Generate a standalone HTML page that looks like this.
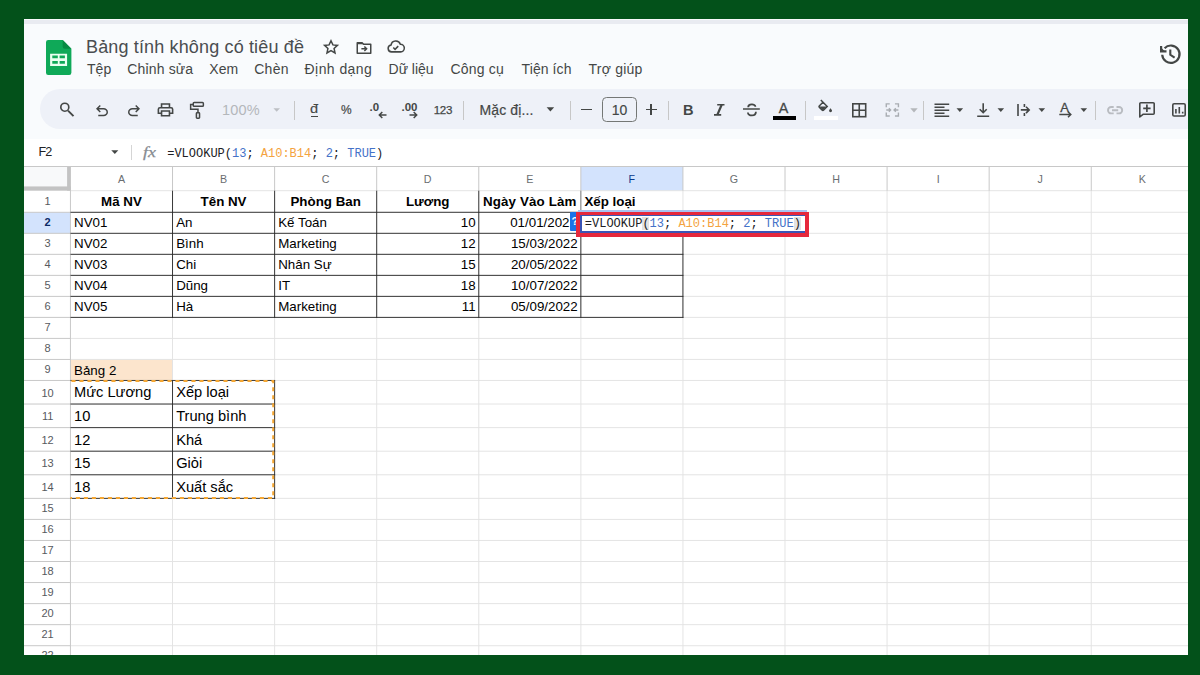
<!DOCTYPE html><html><head><meta charset="utf-8"><title>Sheet</title><style>

html,body{margin:0;padding:0}
body{width:1200px;height:675px;overflow:hidden;background:#03511a;font-family:"Liberation Sans",sans-serif;position:relative}
#f{position:absolute;left:24px;top:19px;width:1164px;height:636px;background:#fff;overflow:hidden}
#f *{position:absolute;box-sizing:border-box}
#f span,#f svg *{position:static}
.t{white-space:nowrap;line-height:1}
.m{font-size:14px;color:#444746;top:63px;height:16px;line-height:16px}
.hl{background:#e1e1e1;height:1px;left:0;width:1164px}
.vl{background:#e1e1e1;width:1px}
.bh{background:#222;height:1px}
.bv{background:#222;width:1px}
.ch{font-size:10.7px;color:#6a6d70;text-align:center;height:14px;line-height:14px}
.rh{font-size:11px;color:#575a5e;text-align:center;left:0.6px;width:46px}
.c{font-size:13.33px;color:#000;white-space:nowrap}
.c2{font-size:14.67px;color:#000;white-space:nowrap}
.b{font-weight:bold}
.sep{width:1px;background:#c7c7c7;top:82px;height:19px}
svg{overflow:visible}
.mono{font-family:"Liberation Mono",monospace;font-size:12px;white-space:pre;color:#202124}
.bl{color:#4472c8}.or{color:#f4a340}

</style></head><body><div id="f">
<div style="left:0;top:0;width:1164px;height:119.6px;background:#f9fbfd"></div>
<div style="left:0;top:0.5px;width:1164px;height:4.5px;background:#e9ebf1"></div>
<svg style="left:21.6px;top:20.8px" width="25.4" height="35" viewBox="0 0 25.4 35">
<path d="M2.2 0H16.7L25.4 8.7V32.8a2.2 2.2 0 0 1-2.2 2.2H2.2a2.2 2.2 0 0 1-2.2-2.2V2.2a2.2 2.2 0 0 1 2.2-2.2z" fill="#0fa958"/>
<path d="M16.7 0L25.4 8.7H18.9a2.2 2.2 0 0 1-2.2-2.2z" fill="#078a43"/>
<path d="M4.1 13.8H21.1V25.9H4.1zM6.3 15.6V18.2H11.8V15.6zM13.6 15.6V18.2H18.9V15.6zM6.3 20.9V23.8H11.8V20.9zM13.6 20.9V23.8H18.9V20.9z" fill="#eafff1" fill-rule="evenodd"/>
</svg>
<div class="t" id="title" style="left:62px;top:17.5px;font-size:18px;color:#4a4d50;height:20px;line-height:20px;letter-spacing:0.15px">Bảng tính không có tiêu đề</div>
<div class="t m" id="m0" style="left:63px;top:42px;letter-spacing:0.05px">Tệp</div>
<div class="t m" id="m1" style="left:103.3px;top:42px;letter-spacing:0.15px">Chỉnh sửa</div>
<div class="t m" id="m2" style="left:185.2px;top:42px;letter-spacing:0.15px">Xem</div>
<div class="t m" id="m3" style="left:230.2px;top:42px;letter-spacing:0.3px">Chèn</div>
<div class="t m" id="m4" style="left:280.6px;top:42px;letter-spacing:0.42px">Định dạng</div>
<div class="t m" id="m5" style="left:364.6px;top:42px;letter-spacing:-0.05px">Dữ liệu</div>
<div class="t m" id="m6" style="left:426.5px;top:42px;letter-spacing:0.18px">Công cụ</div>
<div class="t m" id="m7" style="left:497.6px;top:42px;letter-spacing:0.08px">Tiện ích</div>
<div class="t m" id="m8" style="left:564.6px;top:42px;letter-spacing:0.2px">Trợ giúp</div>
<div style="left:16.3px;top:69.9px;width:1300px;height:40.4px;border-radius:20.2px;background:#eef1f8"></div>
<div id="tb" style="left:-24px;top:-19px;width:1200px;height:675px">
<!-- header icons -->
<svg style="left:322px;top:38px" width="18" height="18" viewBox="0 0 24 24"><path d="M12 3.6l2.55 5.6 6.05.65-4.5 4.1 1.25 6-5.35-3.1-5.35 3.1 1.25-6-4.5-4.1 6.05-.65z" fill="none" stroke="#444746" stroke-width="2" stroke-linejoin="miter"/></svg>
<svg style="left:355px;top:38.5px" width="18" height="18" viewBox="0 0 24 24"><path d="M3 5h6.5l2 2H21v12H3z" fill="none" stroke="#444746" stroke-width="2" stroke-linejoin="round"/><path d="M3 5h6.500l2 2H3z" fill="#444746"/><path d="M8.5 13h6M12.5 10l3 3-3 3" fill="none" stroke="#444746" stroke-width="2"/></svg>
<svg style="left:386.300px;top:37.400px" width="19.400" height="19.200" viewBox="0 0 24 24"><path d="M6.8 18.6a4.3 4.3 0 0 1-.6-8.55A6 6 0 0 1 17.8 9a4.8 4.8 0 0 1 .4 9.6z" fill="none" stroke="#444746" stroke-width="1.9" stroke-linejoin="round"/><path d="M9 13.2l2.2 2.2 4-4" fill="none" stroke="#444746" stroke-width="1.9"/></svg>
<!-- history -->
<svg style="left:1158.300px;top:42px" width="24" height="24" viewBox="0 0 24 24"><path d="M4.200 12.800a8.700 8.700 0 1 0 2.400-6.600" fill="none" stroke="#444746" stroke-width="2.200"/><path d="M3.100 4v5.400h5.400" fill="none" stroke="#444746" stroke-width="2.200"/><path d="M3.100 5.500v3.900h3.900z" fill="#444746"/><path d="M12.3 7.4v5.4l4.3 2.9" fill="none" stroke="#444746" stroke-width="2.1"/></svg>

<!-- toolbar icons -->
<svg style="left:58px;top:101px" width="18" height="18" viewBox="0 0 18 18"><circle cx="6.800" cy="6.200" r="4" fill="none" stroke="#444746" stroke-width="1.650"/><path d="M10 9.6l5.5 5.5" stroke="#444746" stroke-width="1.9" fill="none"/></svg>
<svg style="left:92.9px;top:102.1px" width="18" height="18" viewBox="0 0 24 24"><path fill="#444746" d="M7 19v-2h7.1q1.575 0 2.738-1T18 13.5 16.838 11 14.1 10H7.8l2.6 2.6L9 14 4 9l5-5 1.400 1.400L7.800 8h6.300q2.425 0 4.163 1.575T20 13.500t-1.737 3.925T14.100 19z"/></svg>
<svg style="left:124.5px;top:102.1px" width="18" height="18" viewBox="0 0 24 24"><path fill="#444746" d="M9.900 19q-2.425 0-4.163-1.575T4 13.500t1.737-3.925T9.900 8h6.300l-2.600-2.600L15 4l5 5-5 5-1.400-1.400 2.600-2.600H9.900q-1.575 0-2.738 1T6 13.500 7.163 16 9.900 17H17v2z"/></svg>
<svg style="left:156.200px;top:101px" width="19" height="17.800" viewBox="0 0 24 24" preserveAspectRatio="none" fill="none" stroke="#444746" stroke-width="2"><path d="M7 8V4h10v4"/><path d="M6.5 16.500H3v-5.500a2 2 0 0 1 2-2h14a2 2 0 0 1 2 2v5.500h-3.500"/><path d="M7 13.500h10v6.500H7z"/></svg>
<svg style="left:187.600px;top:99.900px" width="18" height="20" viewBox="0 0 24 26.700" fill="none" stroke="#444746" stroke-width="2"><rect x="7" y="3.500" width="13.500" height="5" rx="1.200"/><path d="M7 6H3.500v6.500H13.300v4.500"/><rect x="11.200" y="17" width="4.200" height="7.500" rx="1"/></svg>
<div class="t" style="left:222px;top:102px;font-size:14.5px;color:#b4b7bb;height:16px;line-height:16px;letter-spacing:0.2px" id="zoom">100%</div>
<svg style="left:273.200px;top:108px" width="7.400" height="4.200" viewBox="0 0 9 5"><path d="M0.500 0.300h8L4.500 4.600z" fill="#bcbfc4"/></svg>
<div class="sep" style="left:294px;top:100.500px"></div>
<div class="t" style="left:310.300px;top:101.300px;font-size:13.500px;color:#444746;height:16px;line-height:16px;-webkit-text-stroke:0.150px #444746;transform:scaleX(1.080);transform-origin:0 0;" id="dong">đ</div>
<div style="left:310.500px;top:115.700px;width:7.800px;height:1.400px;background:#444746"></div>
<div class="t" style="left:340.700px;top:103.400px;font-size:13px;color:#444746;height:14px;line-height:14px;-webkit-text-stroke:0.200px #444746;transform:scaleX(0.920);transform-origin:0 0" id="pct">%</div>
<div class="t" style="left:369.500px;top:100.500px;font-size:11.500px;color:#444746;height:13px;line-height:13px;font-weight:bold" id="d0">.0</div>
<svg style="left:377.600px;top:110.900px" width="9" height="8" viewBox="0 0 9 8"><path d="M8.500 4H1.500M4.300 1L1.300 4l3 3" fill="none" stroke="#444746" stroke-width="1.500"/></svg>
<div class="t" style="left:401.500px;top:100.500px;font-size:11.500px;color:#444746;height:13px;line-height:13px;font-weight:bold;letter-spacing:0px" id="d00">.00</div>
<svg style="left:409px;top:110.900px" width="9" height="8" viewBox="0 0 9 8"><path d="M0.500 4h7M4.700 1l3 3-3 3" fill="none" stroke="#444746" stroke-width="1.500"/></svg>
<div class="t" style="left:433.700px;top:102.800px;font-size:11.600px;color:#444746;height:14px;line-height:14px;letter-spacing:-0.300px;-webkit-text-stroke:0.250px #444746" id="n123">123</div>
<div class="sep" style="left:463px;top:100.500px"></div>
<div class="t" style="left:479.500px;top:101.500px;font-size:14px;color:#444746;height:16px;line-height:16px;letter-spacing:0.120px;-webkit-text-stroke:0.200px #444746" id="font">Mặc đị...</div>
<svg style="left:546.400px;top:106.600px" width="8.800" height="5" viewBox="0 0 10 6"><path d="M0.500 0.300h9L5 5.300z" fill="#444746"/></svg>
<div class="sep" style="left:570px;top:100.500px"></div>
<div style="left:581px;top:108.500px;width:11px;height:1.900px;background:#444746"></div>
<div style="left:602px;top:97px;width:35px;height:24.500px;border:1px solid #747775;border-radius:4.500px"></div>
<div class="t" style="left:602px;width:35px;text-align:center;top:102px;font-size:14px;color:#444746;height:16px;line-height:16px;-webkit-text-stroke:0.150px #444746" id="fs">10</div>
<div style="left:645.500px;top:108.700px;width:11px;height:1.600px;background:#444746"></div>
<div style="left:650.200px;top:104px;width:1.600px;height:11px;background:#444746"></div>
<div class="sep" style="left:668.200px;top:100.500px"></div>
<div class="t" style="left:683px;top:101.500px;font-size:14.600px;color:#444746;height:16px;line-height:16px;font-weight:bold" id="bold">B</div>
<svg style="left:714.300px;top:104.100px" width="10.500" height="11.700" viewBox="0 0 10.500 11.700" fill="none" stroke="#444746"><path d="M3.200 0.800H10.500M0 10.900H7.200" stroke-width="1.600"/><path d="M7.700 0.800L3.300 10.900" stroke-width="2.200"/></svg>
<svg style="left:743px;top:103px" width="17" height="14" viewBox="0 0 17 14" fill="none" stroke="#444746"><path d="M0 6H16.800" stroke-width="1.500"/><path d="M5.200 4.200C5.200 0.600 12.400 0.600 12.400 3.700M4.900 9.400C4.900 13.600 12.900 13.600 12.900 8.700" stroke-width="1.800"/></svg>
<div class="t" style="left:778.800px;top:99.600px;font-size:14.300px;color:#444746;height:16px;line-height:16px;-webkit-text-stroke:0.300px #444746;" id="tcol">A</div>
<div style="left:772.500px;top:116px;width:23.500px;height:3.600px;background:#000"></div>
<div class="sep" style="left:805px;top:100.500px"></div>
<svg style="left:817.800px;top:98.600px" width="15.800" height="14.900" viewBox="0 0 18 17"><path d="M3.200 1.200l7.300 7.300-4.300 4.300a.9.900 0 0 1-1.300 0L1.400 9.300a.9.900 0 0 1 0-1.300l4.800-4.800" fill="none" stroke="#444746" stroke-width="1.700"/><path d="M1.500 8.700h8.500l-4.500 4.300z" fill="#444746"/><path d="M14.300 10.500s1.700 1.900 1.700 3a1.700 1.700 0 0 1-3.400 0c0-1.100 1.700-3 1.700-3z" fill="#444746"/></svg>
<div style="left:813.900px;top:116px;width:24.200px;height:3.600px;background:#fff"></div>
<svg style="left:852px;top:103px" width="14.500" height="14.500" viewBox="0 0 14.500 14.500" fill="none" stroke="#444746" stroke-width="1.600"><rect x="0.800" y="0.800" width="12.900" height="12.900"/><path d="M7.250 0.800v12.900M0.800 7.250h12.900"/></svg>
<svg style="left:885.300px;top:103.100px" width="14.700" height="13.900" viewBox="0 0 16 16" fill="none" stroke="#a9adb2" stroke-width="1.600"><path d="M5 1H1v4M11 1h4v4M5 15H1v-4M11 15h4v-4M1 8h5M4 6l2 2-2 2M15 8h-5M12 6l-2 2 2 2"/></svg>
<svg style="left:909.500px;top:108px" width="8" height="5" viewBox="0 0 8 5"><path d="M0.300 0.300h7.400L4 4.500z" fill="#b4b7bb"/></svg>
<div class="sep" style="left:923px;top:100.500px"></div>
<svg style="left:933.500px;top:102.800px" width="16" height="15" viewBox="0 0 16 15" stroke="#444746" stroke-width="1.550" fill="none"><path d="M0.500 1.200h14.700M0.500 4.200h10M0.500 7.200h14.700M0.500 10.200h10M0.500 13.200h14.700"/></svg>
<svg style="left:956.0px;top:107.700px" width="7.600" height="4.300" viewBox="0 0 9 5.500"><path d="M0.300 0.300h8.400L4.500 5z" fill="#444746"/></svg>
<svg style="left:976.500px;top:102.800px" width="12.400" height="14.200" viewBox="0 0 12.400 14.200" stroke="#444746" stroke-width="1.600" fill="none"><path d="M6.200 0.200v9.300M2.700 6.200l3.500 3.500 3.500-3.500M0.200 13.300h12"/></svg>
<svg style="left:997.3px;top:107.700px" width="7.600" height="4.300" viewBox="0 0 9 5.500"><path d="M0.300 0.300h8.400L4.500 5z" fill="#444746"/></svg>
<svg style="left:1016px;top:103px" width="15" height="14" viewBox="0 0 15 14" stroke="#444746" stroke-width="1.600" fill="none"><path d="M2 1v12M8.400 1v3M8.400 10v3M4.800 6.900h8M10 3.700l3.200 3.200-3.200 3.200"/></svg>
<svg style="left:1038.2px;top:107.700px" width="7.600" height="4.300" viewBox="0 0 9 5.500"><path d="M0.300 0.300h8.400L4.500 5z" fill="#444746"/></svg>
<div class="t" style="left:1060.300px;top:99.700px;font-size:13px;color:#444746;height:16px;line-height:16px;-webkit-text-stroke:0.300px #444746;" id="rot">A</div>
<svg style="left:1059px;top:110.800px" width="13" height="7" viewBox="0 0 13 7" stroke="#444746" stroke-width="1.500" fill="none"><path d="M0.300 3.500h11.500M9 0.700l2.800 2.800L9 6.300"/></svg>
<svg style="left:1079.5px;top:107.700px" width="7.600" height="4.300" viewBox="0 0 9 5.500"><path d="M0.300 0.300h8.400L4.500 5z" fill="#444746"/></svg>
<div class="sep" style="left:1095.300px;top:100.500px"></div>
<svg style="left:1106.500px;top:106px" width="16.200" height="8.400" viewBox="0 0 16.200 8.400" stroke="#b9bcc1" stroke-width="1.900" fill="none"><path d="M6.700 1H4.200a3.200 3.200 0 0 0 0 6.400H6.700M9.500 1h2.500a3.200 3.200 0 0 1 0 6.400H9.500M5 4.200h6.200"/></svg>
<svg style="left:1139px;top:102px" width="16" height="15.500" viewBox="0 0 16 15.500" stroke="#444746" stroke-width="1.600" fill="none"><path d="M1.800 0.800h12.400a1 1 0 0 1 1 1v9.500a1 1 0 0 1-1 1H4L0.800 15V1.800a1 1 0 0 1 1-1z" stroke-linejoin="round"/><path d="M7.900 2.600v7.400M4.200 6.300h7.400" stroke-width="1.700"/></svg>
<svg style="left:1172px;top:103.300px" width="14" height="13.800" viewBox="0 0 14 13.800" stroke="#444746" stroke-width="1.600" fill="none"><rect x="0.800" y="0.800" width="12.400" height="12.200" rx="1.300"/><path d="M3.900 10.600V6M7.300 10.600V4M10.700 10.600V8.800"/></svg>
</div>

<div id="fb" style="left:-24px;top:-19px;width:1200px;height:675px">
<div class="t" style="left:38.400px;top:145px;font-size:12.600px;letter-spacing:-0.900px;color:#202124;height:15px;line-height:15px" id="cellref">F2</div>
<svg style="left:111px;top:149.500px" width="7.600" height="4.200" viewBox="0 0 9 5"><path d="M0.300 0.300h8.400L4.500 4.700z" fill="#444746"/></svg>
<div style="left:131px;top:145px;width:1px;height:15px;background:#d5d5d5"></div>
<div class="t" style="left:143px;top:144.300px;font-size:15px;color:#868b91;-webkit-text-stroke:0.250px #868b91;height:17px;line-height:17px;font-family:'Liberation Serif',serif;font-style:italic;letter-spacing:0px;transform:scaleX(1.2);transform-origin:0 0" id="fx">fx</div>
<div class="mono" style="left:167.200px;top:146.800px;height:14px;line-height:14px" id="ftxt">=VLOOKUP(<span class="bl">13</span>; <span class="or">A10:B14</span>; <span class="bl">2</span>; <span class="bl">TRUE</span>)</div>
</div>

<div id="g" style="left:0;top:147.0px;width:1164px;height:489.0px;background:#fff;overflow:hidden">
<svg style="left:0;top:0" width="1164" height="489.0" viewBox="0 0 1164 489.0"><rect x="556.85" y="1.0" width="102.08" height="23.7" fill="#d3e3fd"/><rect x="0" y="46.3" width="46.45" height="21.02" fill="#d3e3fd"/><rect x="46.45" y="193.44" width="102.08" height="21.02" fill="#fce5cd"/><path d="M46.45 24.7H1164M46.45 46.3H1164M46.45 67.32H1164M46.45 88.34H1164M46.45 109.36H1164M46.45 130.38H1164M46.45 151.4H1164M46.45 172.42H1164M46.45 193.44H1164M46.45 214.46H1164M46.45 238.04H1164M46.45 261.62H1164M46.45 285.2H1164M46.45 308.78H1164M46.45 332.36H1164M46.45 353.41H1164M46.45 374.46H1164M46.45 395.51H1164M46.45 416.56H1164M46.45 437.61H1164M46.45 458.66H1164M46.45 479.71H1164M46.45 500.76H1164M148.53 24.7V489.0M250.61 24.7V489.0M352.69 24.7V489.0M454.77 24.7V489.0M556.85 24.7V489.0M658.93 24.7V489.0M761.01 24.7V489.0M863.09 24.7V489.0M965.17 24.7V489.0M1067.25 24.7V489.0M1169.33 24.7V489.0" stroke="#e3e3e3" stroke-width="0.95" fill="none"/><path d="M0 0.5H1164M0 46.3H46.45M0 67.32H46.45M0 88.34H46.45M0 109.36H46.45M0 130.38H46.45M0 151.4H46.45M0 172.42H46.45M0 193.44H46.45M0 214.46H46.45M0 238.04H46.45M0 261.62H46.45M0 285.2H46.45M0 308.78H46.45M0 332.36H46.45M0 353.41H46.45M0 374.46H46.45M0 395.51H46.45M0 416.56H46.45M0 437.61H46.45M0 458.66H46.45M0 479.71H46.45M0 500.76H46.45M148.53 0.5V24.7M250.61 0.5V24.7M352.69 0.5V24.7M454.77 0.5V24.7M556.85 0.5V24.7M658.93 0.5V24.7M761.01 0.5V24.7M863.09 0.5V24.7M965.17 0.5V24.7M1067.25 0.5V24.7M1169.33 0.5V24.7M46.45 24.7V489.0" stroke="#c8c8c8" stroke-width="1" fill="none"/><rect x="0" y="1.0" width="43.1" height="19.4" fill="#f8f9fa"/><rect x="43.1" y="1.0" width="3.8" height="23.7" fill="#c3c3c3"/><rect x="0" y="20.4" width="46.9" height="4.3" fill="#c3c3c3"/><path d="M556.85 24.7V46.3" stroke="#808080" stroke-width="1" fill="none"/><path d="M46.45 46.3H659.43M46.45 67.32H659.43M46.45 88.34H659.43M46.45 109.36H659.43M46.45 130.38H659.43M46.45 151.4H659.43M148.53 24.7V151.9M250.61 24.7V151.9M352.69 24.7V151.9M454.77 24.7V151.9M556.85 46.3V151.9M658.93 46.3V151.9M46.45 214.46H251.11M46.45 238.04H251.11M46.45 261.62H251.11M46.45 285.2H251.11M46.45 308.78H251.11M46.45 332.36H251.11M148.53 214.46V332.86M250.61 214.46V332.86" stroke="#292929" stroke-width="0.92" fill="none"/><path d="M46.45 214.96H249.21V331.96H46.45" fill="none" stroke="#f5a733" stroke-width="2" stroke-dasharray="4.1 3.9" stroke-dashoffset="-1"/><!--EDSVG--></svg>
<div class="ch" style="left:46.45px;top:5.6px;width:102.08px;color:#6a6d70">A</div>
<div class="ch" style="left:148.53px;top:5.6px;width:102.08px;color:#6a6d70">B</div>
<div class="ch" style="left:250.61px;top:5.6px;width:102.08px;color:#6a6d70">C</div>
<div class="ch" style="left:352.69px;top:5.6px;width:102.08px;color:#6a6d70">D</div>
<div class="ch" style="left:454.77px;top:5.6px;width:102.08px;color:#6a6d70">E</div>
<div class="ch" style="left:556.85px;top:5.6px;width:102.08px;color:#0b3a8c">F</div>
<div class="ch" style="left:658.93px;top:5.6px;width:102.08px;color:#6a6d70">G</div>
<div class="ch" style="left:761.01px;top:5.6px;width:102.08px;color:#6a6d70">H</div>
<div class="ch" style="left:863.09px;top:5.6px;width:102.08px;color:#6a6d70">I</div>
<div class="ch" style="left:965.17px;top:5.6px;width:102.08px;color:#6a6d70">J</div>
<div class="ch" style="left:1067.25px;top:5.6px;width:102.08px;color:#6a6d70">K</div>
<div class="rh" style="top:28.94px;height:12.29px;line-height:12.29px;">1</div>
<div class="rh" style="top:49.97px;height:12.29px;line-height:12.29px;font-weight:bold;color:#0b2a66;">2</div>
<div class="rh" style="top:70.98px;height:12.29px;line-height:12.29px;">3</div>
<div class="rh" style="top:92.01px;height:12.29px;line-height:12.29px;">4</div>
<div class="rh" style="top:113.03px;height:12.29px;line-height:12.29px;">5</div>
<div class="rh" style="top:134.05px;height:12.29px;line-height:12.29px;">6</div>
<div class="rh" style="top:155.07px;height:12.29px;line-height:12.29px;">7</div>
<div class="rh" style="top:176.09px;height:12.29px;line-height:12.29px;">8</div>
<div class="rh" style="top:197.11px;height:12.29px;line-height:12.29px;">9</div>
<div class="rh" style="top:220.69px;height:12.29px;line-height:12.29px;">10</div>
<div class="rh" style="top:244.27px;height:12.29px;line-height:12.29px;">11</div>
<div class="rh" style="top:267.85px;height:12.29px;line-height:12.29px;">12</div>
<div class="rh" style="top:291.43px;height:12.29px;line-height:12.29px;">13</div>
<div class="rh" style="top:315.0px;height:12.29px;line-height:12.29px;">14</div>
<div class="rh" style="top:336.06px;height:12.29px;line-height:12.29px;">15</div>
<div class="rh" style="top:357.11px;height:12.29px;line-height:12.29px;">16</div>
<div class="rh" style="top:378.15px;height:12.29px;line-height:12.29px;">17</div>
<div class="rh" style="top:399.21px;height:12.29px;line-height:12.29px;">18</div>
<div class="rh" style="top:420.25px;height:12.29px;line-height:12.29px;">19</div>
<div class="rh" style="top:441.31px;height:12.29px;line-height:12.29px;">20</div>
<div class="rh" style="top:462.36px;height:12.29px;line-height:12.29px;">21</div>
<div class="rh" style="top:483.4px;height:12.29px;line-height:12.29px;">22</div>
<div class="c b" style="left:46.45px;width:102.08px;text-align:center;top:28.64px;height:14.89px;line-height:14.89px;">Mã NV</div>
<div class="c b" style="left:148.53px;width:102.08px;text-align:center;top:28.64px;height:14.89px;line-height:14.89px;">Tên NV</div>
<div class="c b" style="left:250.61px;width:102.08px;text-align:center;top:28.64px;height:14.89px;line-height:14.89px;">Phòng Ban</div>
<div class="c b" style="left:352.69px;width:102.08px;text-align:center;top:28.64px;height:14.89px;line-height:14.89px;">Lương</div>
<div class="c b" style="left:454.77px;width:102.08px;text-align:center;top:28.64px;height:14.89px;line-height:14.89px;letter-spacing:0.15px;">Ngày Vào Làm</div>
<div class="c b" style="left:560.45px;top:28.64px;height:14.89px;line-height:14.89px;">Xếp loại</div>
<div class="c" style="left:50.050000000000004px;top:49.66px;height:14.89px;line-height:14.89px;">NV01</div>
<div class="c" style="left:152.13px;top:49.66px;height:14.89px;line-height:14.89px;">An</div>
<div class="c" style="left:254.21px;top:49.66px;height:14.89px;line-height:14.89px;">Kế Toán</div>
<div class="c" style="right:712.43px;top:49.66px;height:14.89px;line-height:14.89px;">10</div>
<div class="c" style="right:610.35px;top:49.66px;height:14.89px;line-height:14.89px;right:618.5px;">01/01/202</div>
<div class="c" style="left:50.050000000000004px;top:70.68px;height:14.89px;line-height:14.89px;">NV02</div>
<div class="c" style="left:152.13px;top:70.68px;height:14.89px;line-height:14.89px;">Bình</div>
<div class="c" style="left:254.21px;top:70.68px;height:14.89px;line-height:14.89px;">Marketing</div>
<div class="c" style="right:712.43px;top:70.68px;height:14.89px;line-height:14.89px;">12</div>
<div class="c" style="right:610.35px;top:70.68px;height:14.89px;line-height:14.89px;">15/03/2022</div>
<div class="c" style="left:50.050000000000004px;top:91.7px;height:14.89px;line-height:14.89px;">NV03</div>
<div class="c" style="left:152.13px;top:91.7px;height:14.89px;line-height:14.89px;">Chi</div>
<div class="c" style="left:254.21px;top:91.7px;height:14.89px;line-height:14.89px;">Nhân Sự</div>
<div class="c" style="right:712.43px;top:91.7px;height:14.89px;line-height:14.89px;">15</div>
<div class="c" style="right:610.35px;top:91.7px;height:14.89px;line-height:14.89px;">20/05/2022</div>
<div class="c" style="left:50.050000000000004px;top:112.72px;height:14.89px;line-height:14.89px;">NV04</div>
<div class="c" style="left:152.13px;top:112.72px;height:14.89px;line-height:14.89px;">Dũng</div>
<div class="c" style="left:254.21px;top:112.72px;height:14.89px;line-height:14.89px;">IT</div>
<div class="c" style="right:712.43px;top:112.72px;height:14.89px;line-height:14.89px;">18</div>
<div class="c" style="right:610.35px;top:112.72px;height:14.89px;line-height:14.89px;">10/07/2022</div>
<div class="c" style="left:50.050000000000004px;top:133.74px;height:14.89px;line-height:14.89px;">NV05</div>
<div class="c" style="left:152.13px;top:133.74px;height:14.89px;line-height:14.89px;">Hà</div>
<div class="c" style="left:254.21px;top:133.74px;height:14.89px;line-height:14.89px;">Marketing</div>
<div class="c" style="right:712.43px;top:133.74px;height:14.89px;line-height:14.89px;">11</div>
<div class="c" style="right:610.35px;top:133.74px;height:14.89px;line-height:14.89px;">05/09/2022</div>
<div class="c" style="left:50.050000000000004px;top:197.9px;height:14.89px;line-height:14.89px;">Bảng 2</div>
<div class="c2" style="left:50.050000000000004px;top:218.36px;height:16.39px;line-height:16.39px;">Mức Lương</div>
<div class="c2" style="left:152.13px;top:218.36px;height:16.39px;line-height:16.39px;">Xếp loại</div>
<div class="c2" style="left:50.050000000000004px;top:241.94px;height:16.39px;line-height:16.39px;">10</div>
<div class="c2" style="left:152.13px;top:241.94px;height:16.39px;line-height:16.39px;">Trung bình</div>
<div class="c2" style="left:50.050000000000004px;top:265.52px;height:16.39px;line-height:16.39px;">12</div>
<div class="c2" style="left:152.13px;top:265.52px;height:16.39px;line-height:16.39px;">Khá</div>
<div class="c2" style="left:50.050000000000004px;top:289.1px;height:16.39px;line-height:16.39px;">15</div>
<div class="c2" style="left:152.13px;top:289.1px;height:16.39px;line-height:16.39px;">Giỏi</div>
<div class="c2" style="left:50.050000000000004px;top:312.68px;height:16.39px;line-height:16.39px;">18</div>
<div class="c2" style="left:152.13px;top:312.68px;height:16.39px;line-height:16.39px;">Xuất sắc</div>
<div id="ed" style="left:-24px;top:-166px;width:1200px;height:675px">
<div style="left:569.500px;top:212.300px;width:8px;height:19px;background:#1a73e8;border-radius:1px"></div>
<div class="t" style="left:571.500px;top:215px;font-size:11px;color:#fff;height:13px;line-height:13px;font-weight:bold">?</div>
<div style="left:578px;top:210px;width:229px;height:3px;background:#a8c2f0"></div>
<div style="left:576px;top:212px;width:232.800px;height:24.500px;background:#e6283c"></div>
<div style="left:580.300px;top:215.300px;width:224.700px;height:18.200px;background:#3b55b5"></div>
<div style="left:582px;top:216.300px;width:223px;height:15.200px;background:#fff"></div>
<div style="left:642px;top:217px;width:6.800px;height:12.500px;background:#e3e3e3"></div>
<div style="left:794px;top:217px;width:6.800px;height:12.500px;background:#e3e3e3"></div>
<div class="mono" style="left:584.800px;top:217.200px;height:14px;line-height:14px" id="etxt">=VLOOKUP(<span class="bl">13</span>; <span class="or">A10:B14</span>; <span class="bl">2</span>; <span class="bl">TRUE</span>)</div>
</div>

</div>
</div></body></html>
